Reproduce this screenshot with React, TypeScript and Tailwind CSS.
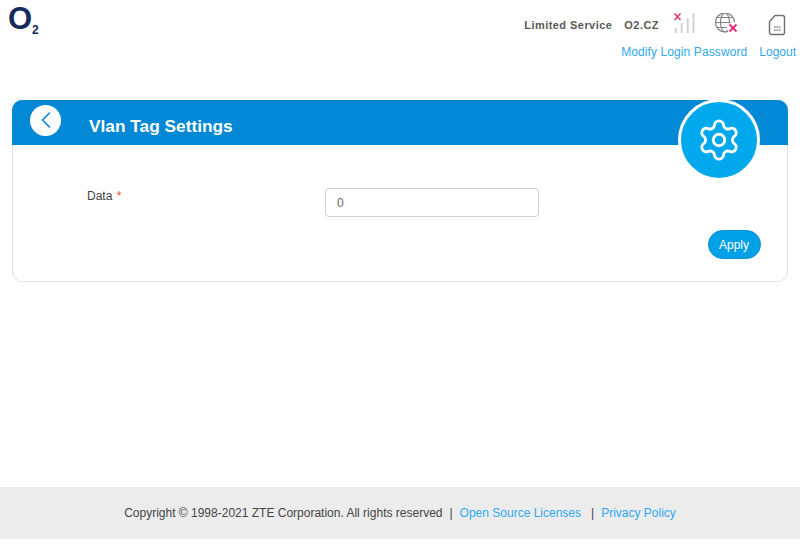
import { ChevronLeft, Settings } from "lucide-react";

function Logo() {
  return (
    <svg width="36" height="40" viewBox="0 0 36 40" className="ml-[8px]" fill="#142c5c" fontWeight="700">
      <text x="0" y="28.800" fontSize="31">O</text>
      <text x="24" y="34" fontSize="12">2</text>
    </svg>
  );
}

function SignalIcon() {
  return (
    <svg width="24" height="24" viewBox="0 0 24 24" fill="none">
      <path d="M1.500 0.500l6 6.500M7.500 0.500l-6 6.500" stroke="#e8345f" strokeWidth="1.500" />
      <path d="M2.700 20v-5M8.700 20V10M14.700 20V5M20.500 20V0" stroke="#d2d2d2" strokeWidth="2" />
    </svg>
  );
}

function GlobeIcon() {
  return (
    <svg width="24" height="24" viewBox="0 0 24 24" fill="none" stroke="#858585" strokeWidth="1.2">
      <circle cx="10" cy="9.500" r="9.500" />
      <ellipse cx="10" cy="9.500" rx="4.500" ry="9.500" />
      <path d="M0.500 9.500h19M2 4.500h16M2 14.500h16" />
      <circle cx="18" cy="15" r="6" fill="#fff" stroke="none" />
      <path d="M14.500 11.500l7 7M21.500 11.500l-7 7" stroke="#e8296f" strokeWidth="1.800" />
    </svg>
  );
}

function SimIcon() {
  return (
    <svg width="18" height="22" viewBox="0 0 18 22" fill="none">
      <path d="M7 1.500h7.500a2 2 0 0 1 2 2v15a2 2 0 0 1-2 2h-11a2 2 0 0 1-2-2V7.500z" stroke="#6f6f6f" strokeWidth="1.400" strokeLinejoin="round" />
      <path d="M6 13h1.500M8.500 13H10M11 13h1.500M6 16h1.500M8.500 16H10M11 16h1.500" stroke="#7d7d7d" strokeWidth="1.400" />
    </svg>
  );
}

export default function App() {
  return (
    <div className="w-[800px] h-[550px] bg-white flex flex-col font-['Liberation_Sans',Arial,sans-serif] text-[12px] overflow-hidden">
      {/* Header */}
      <div className="h-[100px] shrink-0 flex justify-between">
        <Logo />
        <div className="flex flex-col items-end pr-[4px]">
          <div className="h-[44px] pt-[6px] flex items-center font-bold text-[#595959] text-[11px] tracking-[0.45px]">
            <span>Limited Service</span>
            <span className="ml-[12px]">O2.CZ</span>
            <span className="ml-[14px]"><SignalIcon /></span>
            <span className="ml-[18px]"><GlobeIcon /></span>
            <span className="ml-[29px] mr-[10px]"><SimIcon /></span>
          </div>
          <div className="flex text-[#2fa8ee] text-[12px] leading-[16px]">
            <a className="tracking-[0.1px]">Modify Login Password</a>
            <a className="ml-[12px]">Logout</a>
          </div>
        </div>
      </div>

      {/* Card */}
      <div className="mx-[12px] relative h-[182px] shrink-0 rounded-[10px] border border-[#e3e3e3]">
        <div className="-m-px h-[45px] rounded-t-[10px] bg-[#0288d4] flex items-center pl-[18px]">
          <div className="w-[31px] h-[31px] -mt-[5px] rounded-full bg-white flex items-center justify-center text-[#0288d4]">
            <ChevronLeft size={28} strokeWidth={1.4} />
          </div>
          <h1 className="ml-[28px] mt-[9px] text-white font-bold text-[17.3px]">Vlan Tag Settings</h1>
        </div>

        <div className="absolute right-[27px] -top-[2px] w-[82px] h-[82px] rounded-full bg-[#02a8ec] border-[3px] border-white flex items-center justify-center text-white">
          <Settings size={46} strokeWidth={1.5} />
        </div>

        <div className="flex pt-[44px]">
          <label className="ml-[74px] w-[238px] text-[#444] text-[12px] leading-[16px]">
            Data <span className="ml-[1px] text-[#f04a3a]">*</span>
          </label>
          <input
            readOnly
            value="0"
            className="w-[214px] h-[29px] rounded-[4px] border border-[#cfcfcf] px-[11px] text-[#666] text-[12px] outline-none"
          />
        </div>
        <div className="flex justify-end pr-[26px] pt-[13px]">
          <button className="w-[53px] h-[29px] pr-[1px] rounded-full bg-[#02a0e6] border border-[#0a8fd0] text-white text-[12px]">
            Apply
          </button>
        </div>
      </div>

      {/* Footer */}
      <div className="mt-[205px] h-[52px] shrink-0 bg-[#ececec] flex items-center justify-center text-[12px] text-[#444] whitespace-pre">
        <span>Copyright © 1998-2021 ZTE Corporation. All rights reserved</span>
        <span className="ml-[7px]">|</span>
        <a className="ml-[7px] text-[#2fa8ee]">Open Source Licenses</a>
        <span className="ml-[10px]">|</span>
        <a className="ml-[7px] text-[#2fa8ee]">Privacy Policy</a>
      </div>
    </div>
  );
}
